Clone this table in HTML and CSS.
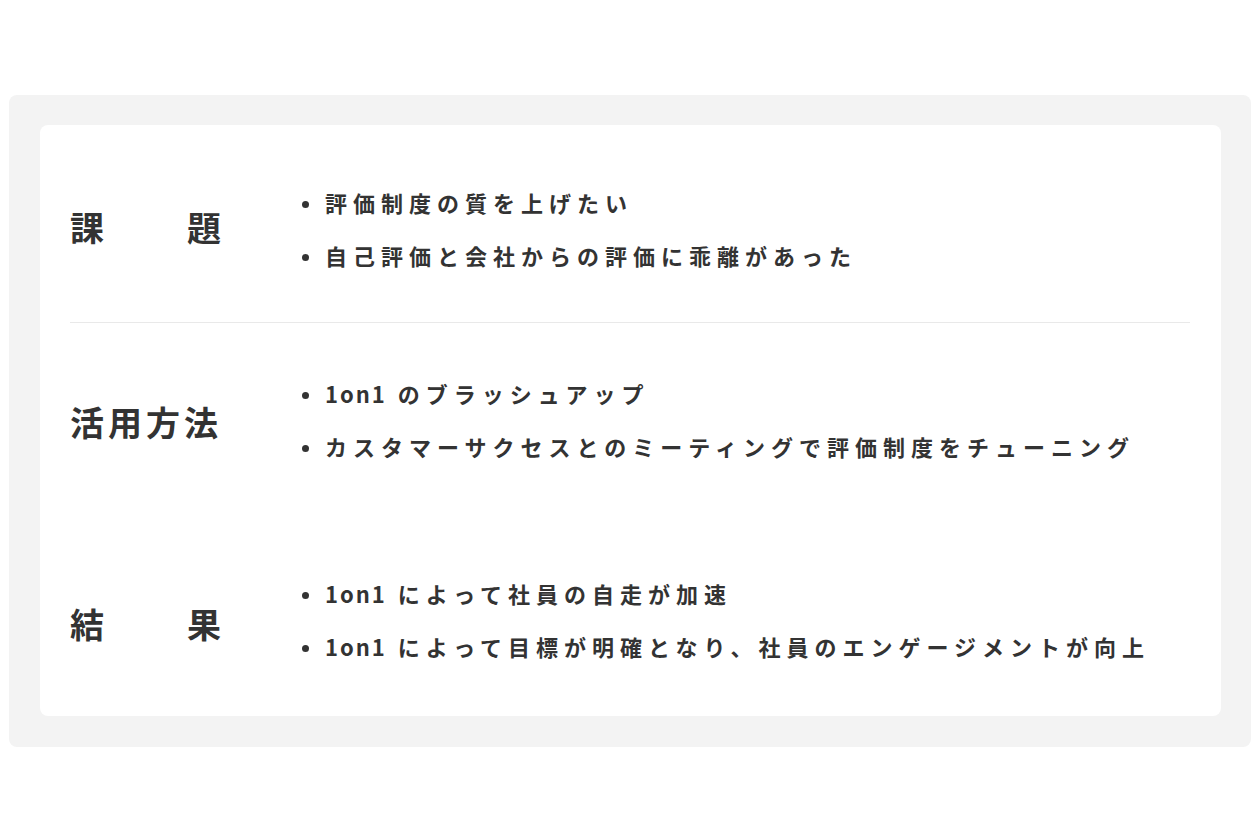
FILE: index.html
```html
<!DOCTYPE html>
<html lang="ja">
<head>
<meta charset="utf-8">
<title>導入事例</title>
<link rel="stylesheet" href="styles.css">
</head>
<body>
<div class="page">
  <section class="panel">
    <div class="card">
      <div class="row row-first">
        <div class="label"><div class="label-spread"><span>課</span><span>題</span></div></div>
        <ul class="items">
          <li>評価制度の質を上げたい</li>
          <li>自己評価と会社からの評価に乖離があった</li>
        </ul>
      </div>
      <div class="row row-plain">
        <div class="label"><span class="label-text">活用方法</span></div>
        <ul class="items">
          <li><span class="latin">1on1</span> のブラッシュアップ</li>
          <li>カスタマーサクセスとのミーティングで評価制度をチューニング</li>
        </ul>
      </div>
      <div class="row row-last">
        <div class="label"><div class="label-spread"><span>結</span><span>果</span></div></div>
        <ul class="items">
          <li><span class="latin">1on1</span> によって社員の自走が加速</li>
          <li><span class="latin">1on1</span> によって目標が明確となり、社員のエンゲージメントが向上</li>
        </ul>
      </div>
    </div>
  </section>
</div>
</body>
</html>
```

FILE: styles.css
```css
* { box-sizing: border-box; }

html, body {
  margin: 0;
  padding: 0;
  background: #ffffff;
}

body {
  font-family: "Noto Sans CJK JP", "Noto Sans", sans-serif;
  color: #333333;
}

.page {
  padding: 95px 9px 0 9px;
}

.panel {
  background: #f3f3f3;
  border-radius: 8px;
  padding: 30px 30px 31px 31px;
}

.card {
  background: #ffffff;
  border-radius: 8px;
  padding: 0 31px 0 30px;
}

.row {
  display: flex;
  align-items: center;
  padding: 56px 0 57px;
}

.row-first {
  padding: 61px 0 51px;
  border-bottom: 1px solid #e9e9e9;
}

.row-plain {
  padding: 54px 0 57px;
}

.row-last {
  padding: 58px 0 54px;
}

.label {
  flex: 0 0 232px;
  font-size: 34px;
  font-weight: 700;
  line-height: 1.5;
  padding-top: 4px;
}

.row-first .label {
  padding-top: 0;
  padding-bottom: 4px;
}

.row-last .label {
  padding-top: 8px;
}

.label-spread {
  display: flex;
  justify-content: space-between;
  width: 151px;
}

.label-text {
  letter-spacing: 4px;
}

.items {
  list-style: none;
  margin: 0;
  padding: 0;
  display: flex;
  flex-direction: column;
  gap: 21px;
}

.items li {
  display: flex;
  align-items: center;
  font-size: 22px;
  font-weight: 700;
  line-height: 32px;
  letter-spacing: 6px;
  white-space: pre;
}

.items li::before {
  content: "";
  flex: 0 0 7px;
  width: 7px;
  height: 7px;
  border-radius: 50%;
  background: #333333;
  margin-right: 16px;
  transform: translateY(2px);
}

.latin {
  letter-spacing: 2px;
}
```
